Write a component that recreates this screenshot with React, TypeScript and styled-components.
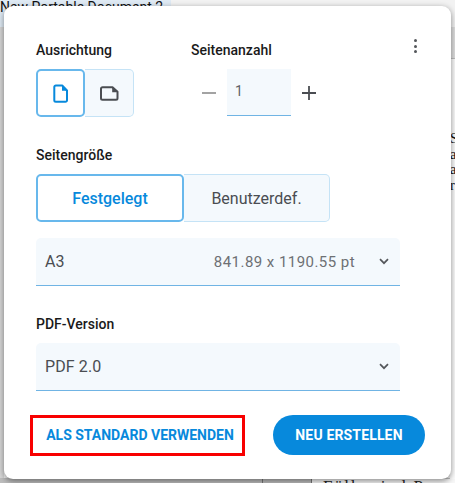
import React from "react";
import styled, { createGlobalStyle } from "styled-components";

const Global = createGlobalStyle`
  html, body { margin: 0; padding: 0; background: #f3f3f3; }
  body { width: 455px; height: 483px; overflow: hidden; font-family: Roboto, "Liberation Sans", sans-serif; }
`;

const Page = styled.div`
  position: relative;
  width: 455px;
  height: 483px;
  overflow: hidden;
  padding: 6px 4px 4px;
  box-sizing: border-box;
`;

const Backdrop = styled.div`
  position: absolute;
  inset: 0;
  background: #f2f2f2;
`;
const DocTab = styled.div`
  position: absolute;
  left: 0; top: 0;
  width: 171px;
  height: 27px;
  background: #dfeaf4;
  color: #111;
  font-size: 14px;
  line-height: 15px;
  white-space: nowrap;
  overflow: hidden;
`;
const ToolBand = styled.div`
  position: absolute;
  left: 0; right: 0; top: 27px;
  height: 31px;
  background: #dedede;
  border-bottom: 1px solid #bdbdbd;
`;
const SideBar = styled.div`
  position: absolute;
  left: 0; top: 27px; bottom: 0;
  width: 4px;
  background: #d6d6d6;
`;
const BottomBand = styled.div`
  position: absolute;
  left: 0; right: 0; bottom: 0;
  height: 5px;
  background: #bdbdbd;
`;
const BottomTick = styled.div`
  position: absolute;
  left: 262px;
  bottom: 0;
  width: 1px;
  height: 5px;
  background: #777;
`;
const PaperRight = styled.div`
  position: absolute;
  left: 450px; right: 0; top: 59px; bottom: 0;
  background: #fbfbfb;
  font: 14.5px/15.5px "Liberation Serif", serif;
  color: #111;
  padding-top: 72px;
`;
const PaperBottom = styled.div`
  position: absolute;
  left: 311px; right: 0; bottom: 0;
  height: 4px;
  background: #f7f7f7;
  border-left: 1px solid #777;
  font: 17px/16px "Liberation Serif", serif;
  color: #222;
  white-space: nowrap;
  padding-left: 11px;
  overflow: hidden;
  letter-spacing: 1.7px;
`;

const Card = styled.div`
  position: relative;
  box-sizing: border-box;
  width: 447px;
  height: 473px;
  background: #fff;
  border-radius: 9px;
  box-shadow: 0 2px 6px rgba(0,0,0,0.45);
  padding: 35px 20px 0 32px;
  display: flex;
  flex-direction: column;
`;

const Label = styled.div`
  color: #1a1a1a;
  font-size: 14px;
  font-weight: 500;
  line-height: 18px;
`;

const TopRow = styled.div`
  display: flex;
  gap: 57px;
`;
const Column = styled.div`
  display: flex;
  flex-direction: column;
  gap: 10px;
`;
const Segments = styled.div<{ $w: number }>`
  display: flex;
  width: ${(p) => p.$w}px;
`;
const Segment = styled.button<{ $active?: boolean; $w: number }>`
  box-sizing: border-box;
  width: ${(p) => p.$w}px;
  height: 48px;
  padding: 0;
  margin: 0;
  display: flex;
  align-items: center;
  justify-content: center;
  font-family: inherit;
  font-size: 16px;
  font-weight: ${(p) => (p.$active ? 500 : 400)};
  color: ${(p) => (p.$active ? "#0789dc" : "#4a4d52")};
  background: ${(p) => (p.$active ? "#fff" : "#f4f9fd")};
  border: ${(p) => (p.$active ? "2px solid #68b8ec" : "1px solid #c5e3f6")};
  ${(p) => (p.$active ? "" : "border-left: none;")}
  border-radius: ${(p) => (p.$active ? "5px" : "0 5px 5px 0")};
`;

const Counter = styled.div`
  display: flex;
  align-items: flex-start;
`;
const StepButton = styled.div`
  width: 36px;
  height: 47px;
  display: flex;
  align-items: center;
  justify-content: center;
`;
const CountField = styled.div`
  box-sizing: border-box;
  width: 64px;
  height: 47px;
  background: #f4f9fd;
  border-bottom: 1px solid #70b4e4;
  color: #5f6266;
  font-size: 14px;
  padding: 13px 8px 0;
  line-height: 18px;
`;

const Kebab = styled.div`
  position: absolute;
  left: 408px;
  top: 33px;
  width: 7px;
  height: 14px;
  display: flex;
  flex-direction: column;
  justify-content: space-between;
  align-items: center;
  i { width: 3px; height: 3px; border-radius: 50%; background: #54575b; display: block; }
`;

const Section = styled(Column)<{ $top: number }>`
  margin-top: ${(p) => p.$top}px;
`;

const Select = styled.div<{ $top?: number }>`
  box-sizing: border-box;
  width: 364px;
  height: 48px;
  margin-top: ${(p) => p.$top ?? 0}px;
  background: #f4f9fd;
  border-radius: 5px 5px 0 0;
  border-bottom: 1px solid #70b4e4;
  display: flex;
  align-items: center;
  padding: 0 11px 0 9px;
  color: #4a4d52;
  font-size: 16px;
  letter-spacing: 0.1px;
`;
const SelectValue = styled.span`
  flex: 1;
`;
const SelectDetail = styled.span`
  color: #6d7074;
  font-size: 15px;
  letter-spacing: 0.45px;
  margin-right: 24px;
`;

const Actions = styled.div`
  display: flex;
  align-items: flex-start;
  margin-top: 24px;
  margin-left: -6px;
`;
const LinkButton = styled.button`
  box-sizing: border-box;
  flex: none;
  width: 215px;
  height: 41px;
  padding: 0 0 1px 5px;
  border: 3px solid #f80000;
  background: #fff;
  color: #0789dc;
  font-family: inherit;
  font-size: 14px;
  font-weight: 700;
  white-space: nowrap;
`;
const PrimaryButton = styled.button`
  box-sizing: border-box;
  flex: none;
  width: 152px;
  height: 40px;
  margin-left: 28px;
  border: none;
  border-radius: 20px;
  background: #0789dc;
  color: #fff;
  font-family: inherit;
  font-size: 14px;
  font-weight: 700;
  letter-spacing: 0.15px;
  padding: 0;
  white-space: nowrap;
`;

const Chevron = () => (
  <svg width="10" height="7" viewBox="0 0 10 7" fill="none">
    <path d="M1 1.2 5 5.2 9 1.2" stroke="#54575b" strokeWidth="1.7" />
  </svg>
);

export default function App() {
  return (
    <>
      <Global />
      <Page>
        <Backdrop />
        <DocTab>New Portable Document 2</DocTab>
        <ToolBand />
        <SideBar />
        <BottomBand />
        <BottomTick />
        <PaperRight>Su<br />a<br />a<br />r</PaperRight>
        <PaperBottom>Fülle sind P</PaperBottom>
        <Card>
          <Kebab><i /><i /><i /></Kebab>
          <TopRow>
            <Column>
              <Label>Ausrichtung</Label>
              <Segments $w={98}>
                <Segment $active $w={49}>
                  <svg width="16" height="19" viewBox="0 0 16 19" fill="none">
                    <path d="M2.8 1.5h6.4l4.8 5v9.7a1.5 1.5 0 0 1-1.5 1.5H2.8a1.5 1.5 0 0 1-1.5-1.5V3a1.5 1.5 0 0 1 1.5-1.5Z" stroke="#0789dc" strokeWidth="2" strokeLinejoin="round" />
                    <path d="M9 1.5 14 6.7H9Z" fill="#0789dc" />
                  </svg>
                </Segment>
                <Segment $w={49}>
                  <svg width="19" height="15" viewBox="0 0 19 15" fill="none">
                    <path d="M2.5 1.2h10l5 4.6v6.4a1.5 1.5 0 0 1-1.5 1.5H2.5A1.5 1.5 0 0 1 1 12.2V2.7a1.5 1.5 0 0 1 1.5-1.5Z" stroke="#4a4d52" strokeWidth="2" strokeLinejoin="round" />
                    <path d="M12.2 1.2 17.6 6.2H12.2Z" fill="#4a4d52" />
                  </svg>
                </Segment>
              </Segments>
            </Column>
            <Column>
              <Label>Seitenanzahl</Label>
              <Counter>
                <StepButton>
                  <svg width="14" height="2" viewBox="0 0 14 2"><rect width="14" height="2" fill="#a3a3a3" /></svg>
                </StepButton>
                <CountField>1</CountField>
                <StepButton>
                  <svg width="14" height="14" viewBox="0 0 14 14"><path d="M7 0v14M0 7h14" stroke="#4a4d52" strokeWidth="1.8" /></svg>
                </StepButton>
              </Counter>
            </Column>
          </TopRow>

          <Section $top={29}>
            <Label>Seitengröße</Label>
            <Segments $w={294}>
              <Segment $active $w={148}>Festgelegt</Segment>
              <Segment $w={146}>Benutzerdef.</Segment>
            </Segments>
          </Section>
          <Select $top={16}>
            <SelectValue>A3</SelectValue>
            <SelectDetail>841.89 x 1190.55 pt</SelectDetail>
            <Chevron />
          </Select>

          <Section $top={29}>
            <Label>PDF-Version</Label>
            <Select>
              <SelectValue>PDF 2.0</SelectValue>
              <Chevron />
            </Select>
          </Section>

          <Actions>
            <LinkButton>ALS STANDARD VERWENDEN</LinkButton>
            <PrimaryButton>NEU ERSTELLEN</PrimaryButton>
          </Actions>
        </Card>
      </Page>
    </>
  );
}
